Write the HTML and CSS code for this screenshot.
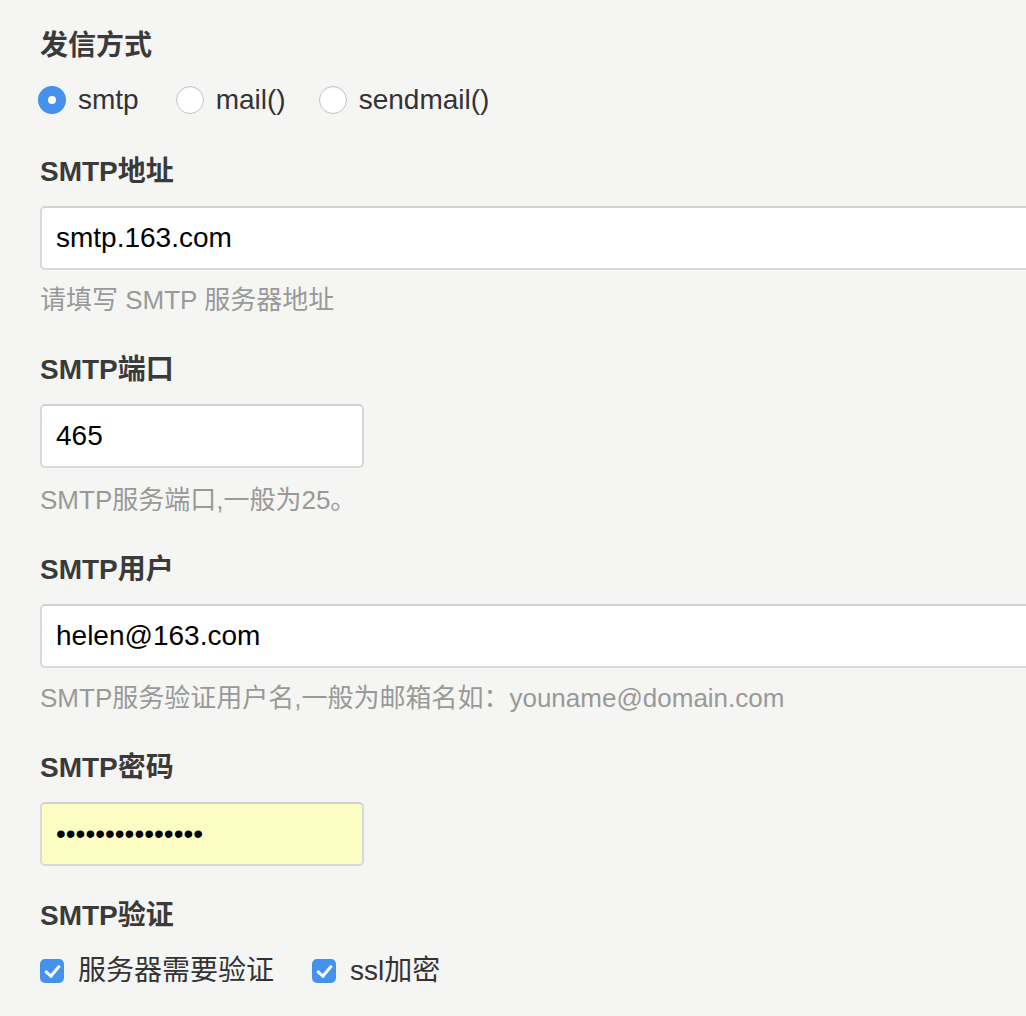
FILE: index.html
```html
<!DOCTYPE html>
<html lang="zh-CN">
<head>
<meta charset="utf-8">
<title>邮件设置</title>
<link rel="stylesheet" href="styles.css">
</head>
<body>
<form class="settings">
  <div class="group group-first">
    <div class="label">发信方式</div>
    <div class="choices">
      <label class="choice"><input type="radio" name="mode" class="radio" checked><span>smtp</span></label>
      <label class="choice"><input type="radio" name="mode" class="radio"><span>mail()</span></label>
      <label class="choice"><input type="radio" name="mode" class="radio"><span>sendmail()</span></label>
    </div>
  </div>

  <div class="group">
    <div class="label">SMTP地址</div>
    <input class="field field-wide" type="text" value="smtp.163.com">
    <div class="help">请填写 SMTP 服务器地址</div>
  </div>

  <div class="group">
    <div class="label">SMTP端口</div>
    <input class="field field-short" type="text" value="465">
    <div class="help help-loose">SMTP服务端口,一般为25。</div>
  </div>

  <div class="group">
    <div class="label">SMTP用户</div>
    <input class="field field-wide" type="text" value="helen@163.com">
    <div class="help">SMTP服务验证用户名,一般为邮箱名如：youname@domain.com</div>
  </div>

  <div class="group">
    <div class="label">SMTP密码</div>
    <input class="field field-short field-autofill" type="password" value="abcdefghijklmno">
  </div>

  <div class="group group-tight">
    <div class="label label-checks">SMTP验证</div>
    <div class="choices checks">
      <label class="choice"><input type="checkbox" class="check" checked><span>服务器需要验证</span></label>
      <label class="choice"><input type="checkbox" class="check" checked><span>ssl加密</span></label>
    </div>
  </div>
</form>
</body>
</html>
```

FILE: styles.css
```css
html, body {
  margin: 0;
  padding: 0;
  background: #f5f5f3;
  overflow: hidden;
}

body {
  font-family: "Liberation Sans", "Noto Sans CJK SC", sans-serif;
  font-size: 28px;
  color: #333;
}

.settings {
  padding: 26px 0 0 40px;
}

.group {
  margin-top: 32px;
}

.group-first {
  margin-top: 0;
}

.group-tight {
  margin-top: 30px;
}

.label {
  font-weight: bold;
  line-height: 40px;
  height: 40px;
  margin-bottom: 14px;
  color: #3a3a3a;
}

.label-checks {
  margin-bottom: 15px;
}

.field {
  display: block;
  box-sizing: border-box;
  height: 64px;
  margin: 0;
  padding: 0 14px;
  border: 2px solid #d9d9d9;
  border-top-color: #d2d2d2;
  border-radius: 5px;
  background: #fff;
  font-family: "Liberation Sans", "Noto Sans CJK SC", sans-serif;
  font-size: 28px;
  color: #000;
  outline: none;
}

.field-wide {
  width: 1100px;
}

.field-short {
  width: 324px;
}

.field-autofill {
  background: #fbfdc2;
}

.help {
  margin-top: 12px;
  line-height: 36px;
  font-size: 26px;
  color: #999;
}

.help-loose {
  margin-top: 14px;
}

.choices {
  display: flex;
  align-items: center;
  height: 40px;
  margin-left: -2px;
}

.checks {
  margin-left: 0;
}

.choice {
  display: flex;
  align-items: center;
  margin-right: 36px;
  color: #333;
  line-height: 40px;
}

.choice:first-child {
  margin-right: 37px;
}

.choice:nth-child(2) {
  margin-right: 33px;
}

.checks .choice {
  margin-right: 38px;
}

.radio {
  appearance: none;
  -webkit-appearance: none;
  box-sizing: border-box;
  width: 28px;
  height: 28px;
  margin: 0 12px 0 0;
  border: 1px solid #c4c4c4;
  border-radius: 50%;
  background: #fff;
  box-shadow: inset 0 1px 1px rgba(0, 0, 0, 0.06);
}

.radio:checked {
  border: 10px solid #4592ee;
  background: #fff;
  box-shadow: none;
}

.check {
  appearance: none;
  -webkit-appearance: none;
  box-sizing: border-box;
  width: 24px;
  height: 24px;
  margin: 0 14px 0 0;
  border-radius: 5px;
  background: #4592ee;
  position: relative;
}

.check:checked::after {
  content: "";
  position: absolute;
  left: 8px;
  top: 3px;
  width: 6px;
  height: 12px;
  border: solid #fff;
  border-width: 0 3px 3px 0;
  transform: rotate(40deg);
}
```
